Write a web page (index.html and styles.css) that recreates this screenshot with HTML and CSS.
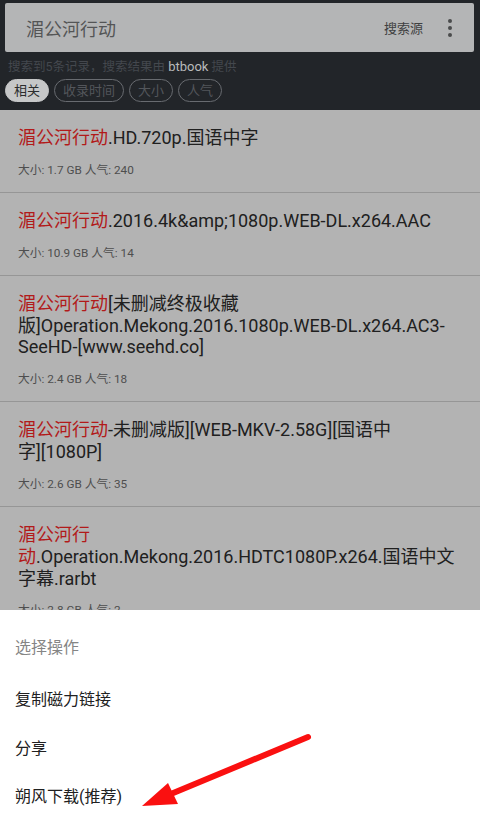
FILE: index.html
```html
<!DOCTYPE html>
<html lang="zh-CN">
<head>
    <meta charset="UTF-8">
    <meta name="viewport" content="width=device-width, initial-scale=1.0">
    <title>湄公河行动 - 搜索结果</title>
    <link rel="stylesheet" href="styles.css">
</head>
<body>
    <div class="top">
        <div class="search-bar">
            <span class="query">湄公河行动</span>
            <span class="source">搜索源</span>
            <span class="more"><i></i><i></i><i></i></span>
        </div>
        <div class="summary">搜索到5条记录，搜索结果由 <b>btbook</b> 提供</div>
        <div class="chips">
            <span class="chip active">相关</span>
            <span class="chip">收录时间</span>
            <span class="chip">大小</span>
            <span class="chip">人气</span>
        </div>
    </div>

    <div class="results">
        <div class="item">
            <div class="title"><em>湄公河行动</em>.HD.720p.国语中字</div>
            <div class="meta">大小: 1.7 GB 人气: 240</div>
        </div>
        <div class="item">
            <div class="title"><em>湄公河行动</em>.2016.4k&amp;amp;1080p.WEB-DL.x264.AAC</div>
            <div class="meta">大小: 10.9 GB 人气: 14</div>
        </div>
        <div class="item">
            <div class="title"><em>湄公河行动</em>[未删减终极收藏<br>版]Operation.Mekong.2016.1080p.WEB-DL.x264.AC3-<br>SeeHD-[www.seehd.co]</div>
            <div class="meta">大小: 2.4 GB 人气: 18</div>
        </div>
        <div class="item">
            <div class="title"><em>湄公河行动</em>-未删减版][WEB-MKV-2.58G][国语中<br>字][1080P]</div>
            <div class="meta">大小: 2.6 GB 人气: 35</div>
        </div>
        <div class="item">
            <div class="title"><em>湄公河行<br>动</em>.Operation.Mekong.2016.HDTC1080P.x264.国语中文<br>字幕.rarbt</div>
            <div class="meta">大小: 2.8 GB 人气: 2</div>
        </div>
    </div>

    <div class="sheet">
        <div class="sheet-title">选择操作</div>
        <div class="sheet-item">复制磁力链接</div>
        <div class="sheet-item">分享</div>
        <div class="sheet-item">朔风下载(推荐)</div>
        <svg class="arrow" width="480" height="214" viewBox="0 0 480 214">
            <line x1="308" y1="127" x2="166" y2="186" stroke="#fa1010" stroke-width="6" stroke-linecap="round"/>
            <polygon points="142,196 168,173 178,194" fill="#fa1010"/>
        </svg>
    </div>
</body>
</html>
```

FILE: styles.css
```css
body {
    margin: 0;
    width: 480px;
    height: 824px;
    overflow: hidden;
    font-family: Roboto, "Noto Sans CJK SC", sans-serif;
    background: #b3b3b3;
    position: relative;
}

/* Header */
.top {
    background: #222529;
    padding: 3px 6px 8px 5px;
}

.search-bar {
    height: 49px;
    background: #b4b5b6;
    border-radius: 2px;
    display: flex;
    align-items: center;
    padding: 0 22px 0 21px;
}

.query {
    flex: 1;
    font-size: 18px;
    color: #545556;
}

.source {
    font-size: 13px;
    color: #3f4041;
    margin-right: 25px;
}

.more {
    display: flex;
    flex-direction: column;
    gap: 3px;
}

.more i {
    width: 4px;
    height: 4px;
    border-radius: 50%;
    background: #4a4b4c;
}

.summary {
    font-size: 12.5px;
    color: #44484e;
    margin: 6px 0 0 3px;
    height: 18px;
    line-height: 18px;
}

.summary b {
    font-weight: normal;
    color: #b9babb;
    font-size: 13px;
}

.chips {
    display: flex;
    gap: 5px;
    margin-top: 3px;
}

.chip {
    height: 21px;
    line-height: 21px;
    padding: 0 8px;
    border: 1px solid #686b70;
    border-radius: 12px;
    font-size: 13px;
    color: #53565b;
}

.chip.active {
    background: #c6c7c8;
    border-color: #c6c7c8;
    color: #2c2d2e;
}

/* Result list */
.item {
    padding: 17px 18px 14.3px;
    border-bottom: 1px solid #969696;
}

.title {
    font-size: 18px;
    line-height: 21.7px;
    color: #202020;
    white-space: nowrap;
}

.title em {
    font-style: normal;
    color: #b21a1a;
}

.meta {
    margin-top: 14px;
    font-size: 11.75px;
    line-height: 15px;
    color: #4e4e4e;
}

/* Action sheet */
.sheet {
    position: absolute;
    left: 0;
    top: 610px;
    width: 480px;
    height: 214px;
    background: #fff;
    padding: 24px 15px 0;
    box-sizing: border-box;
}

.sheet-title {
    font-size: 16px;
    line-height: 28px;
    color: #858585;
    margin-bottom: 14px;
}

.sheet-item {
    font-size: 16px;
    line-height: 48.5px;
    color: #212121;
}

.arrow {
    position: absolute;
    left: 0;
    top: 0;
}
```
